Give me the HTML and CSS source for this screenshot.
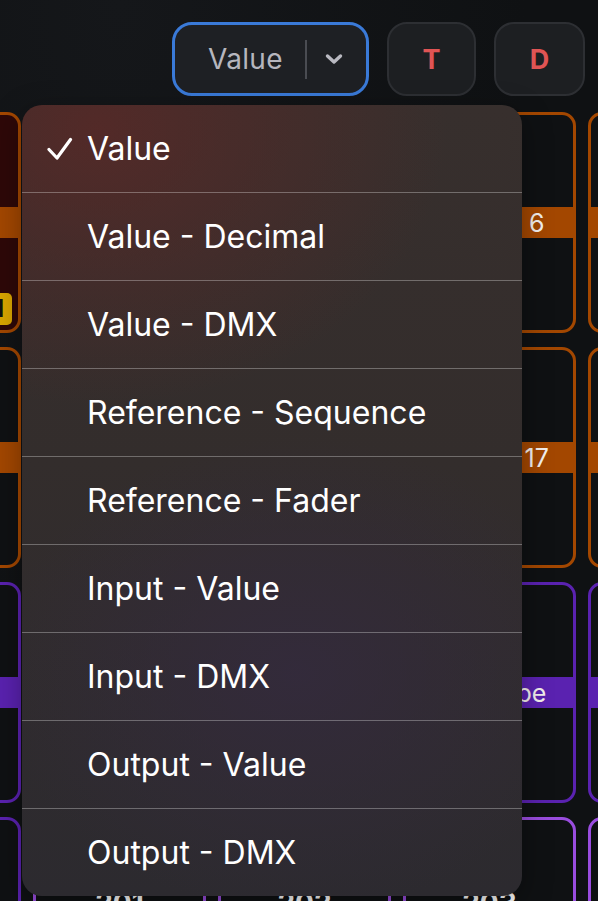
FILE: index.html
```html
<!DOCTYPE html>
<html>
<head>
<meta charset="utf-8">
<link rel="stylesheet" href="styles.css">
</head>
<body>
<div class="page">
  <header class="topbar">
    <div class="select">
      <span class="select-value">Value</span>
      <span class="select-div"></span>
      <svg class="chev" width="18" height="12" viewBox="0 0 18 12"><polyline points="2.5,3 9,9 15.5,3" fill="none" stroke="#b9b9c1" stroke-width="3.4" stroke-linecap="round" stroke-linejoin="round"/></svg>
    </div>
    <button class="tbtn">T</button>
    <button class="tbtn wide">D</button>
  </header>

  <main class="grid">
    <div class="tile orange red-bg"><div class="band"><span>Groupe 1</span></div><span class="badge">1</span></div>
    <div class="tile orange"><div class="band"><span>Groupe 2</span></div></div>
    <div class="tile orange"><div class="band"><span>Groupe 4</span></div></div>
    <div class="tile orange"><div class="band"><span>Groupe 6</span></div></div>
    <div class="tile orange"><div class="band"><span>Groupe 7</span></div></div>

    <div class="tile orange"><div class="band"><span>Groupe 12</span></div></div>
    <div class="tile orange"><div class="band"><span>Groupe 15</span></div></div>
    <div class="tile orange"><div class="band"><span>Groupe 16</span></div></div>
    <div class="tile orange"><div class="band"><span>Groupe 17</span></div></div>
    <div class="tile orange"><div class="band"><span>Groupe 18</span></div></div>

    <div class="tile purple"><div class="band"><span>Color</span></div></div>
    <div class="tile purple"><div class="band"><span>Gobo</span></div></div>
    <div class="tile purple"><div class="band"><span>Prism</span></div></div>
    <div class="tile purple"><div class="band"><span>Fx Strobe</span></div></div>
    <div class="tile purple"><div class="band"><span>Zoom</span></div></div>

    <div class="tile purple"><div class="num">200</div></div>
    <div class="tile violet"><div class="num">201</div></div>
    <div class="tile violet"><div class="num">202</div></div>
    <div class="tile violet"><div class="num">203</div></div>
    <div class="tile violet"><div class="num">204</div></div>
  </main>

  <ul class="menu">
    <li class="item"><span class="check"><svg width="26" height="24" viewBox="0 0 26 24"><polyline points="2,12.5 10,21 23.5,2.5" fill="none" stroke="#ffffff" stroke-width="3.2" stroke-linecap="round" stroke-linejoin="round"/></svg></span><span class="label">Value</span></li>
    <li class="item"><span class="check"></span><span class="label">Value - Decimal</span></li>
    <li class="item"><span class="check"></span><span class="label">Value - DMX</span></li>
    <li class="item"><span class="check"></span><span class="label">Reference - Sequence</span></li>
    <li class="item"><span class="check"></span><span class="label">Reference - Fader</span></li>
    <li class="item"><span class="check"></span><span class="label">Input - Value</span></li>
    <li class="item"><span class="check"></span><span class="label">Input - DMX</span></li>
    <li class="item"><span class="check"></span><span class="label">Output - Value</span></li>
    <li class="item"><span class="check"></span><span class="label">Output - DMX</span></li>
  </ul>
</div>
</body>
</html>
```

FILE: styles.css
```css
* { box-sizing: border-box; }
html, body {
  margin: 0;
  padding: 0;
  width: 598px;
  height: 901px;
  overflow: hidden;
  background: #101214;
  font-family: Inter, "Noto Sans", sans-serif;
}
.page {
  position: relative;
  width: 598px;
  height: 901px;
  overflow: hidden;
  background: radial-gradient(ellipse at 20% 0%, #15171a 0%, #0f1113 60%);
}
.topbar {
  display: flex;
  justify-content: flex-end;
  gap: 18px;
  padding: 22px 13px 0 0;
  height: 96px;
}
.select {
  width: 197px;
  height: 74px;
  border: 3px solid #3a7ad8;
  border-radius: 20px;
  background: #1e2024;
  display: flex;
  align-items: center;
  padding-left: 33px;
}
.select-value {
  font-family: Inter, sans-serif;
  font-weight: 400;
  font-size: 28px;
  color: #b6b6be;
  letter-spacing: 0.3px;
  width: 97px;
}
.select-div {
  width: 2px;
  height: 39px;
  background: #4a4c52;
}
.chev {
  margin-left: 18px;
}
.tbtn {
  width: 89px;
  height: 74px;
  border: 2.5px solid #2d2f33;
  border-radius: 20px;
  background: #1d1f22;
  color: #e05454;
  font-family: Inter, sans-serif;
  font-weight: 700;
  font-size: 27px;
  padding: 0;
  display: flex;
  align-items: center;
  justify-content: center;
}
.tbtn.wide { width: 91px; }

.grid {
  display: grid;
  grid-template-columns: repeat(5, 173px);
  grid-auto-rows: 221px;
  column-gap: 12px;
  row-gap: 14px;
  margin-top: 16px;
  margin-left: -152px;
  width: 920px;
}
.tile {
  position: relative;
  border: 3px solid #a34700;
  border-radius: 14px;
  background: #0f1113;
  padding-top: 92px;
}
.tile.orange { border-color: #a34700; }
.tile.orange .band { background: #a34700; }
.tile.red-bg { background: #2e0808; }
.tile.purple { border-color: #5a22b0; }
.tile.purple .band { background: #5a22b0; }
.tile.violet { border-color: #9a4ddf; padding-top: 66px; }
.tile.purple:has(.num) { padding-top: 66px; }
.band {
  height: 31px;
  margin: 0 -1px;
  display: flex;
  align-items: center;
  justify-content: center;
  color: #f4f0ee;
  font-family: Inter, sans-serif;
  font-size: 25px;
  white-space: nowrap;
  overflow: hidden;
}
.num {
  text-align: center;
  color: #ffffff;
  font-family: Inter, sans-serif;
  font-weight: 700;
  font-size: 28px;
}
.badge {
  position: absolute;
  right: 6px;
  bottom: 5px;
  background: #d9a600;
  color: #111;
  font-weight: 700;
  font-size: 24px;
  line-height: 32px;
  height: 32px;
  padding: 0 8px;
  border-radius: 5px;
}

.menu {
  position: absolute;
  left: 22px;
  top: 105px;
  width: 500px;
  margin: 0;
  padding: 0;
  list-style: none;
  border-radius: 20px;
  overflow: hidden;
  background:
    radial-gradient(ellipse 70% 35% at 15% 3%, rgba(92,40,38,0.75) 0%, rgba(92,40,38,0) 100%),
    radial-gradient(ellipse 60% 30% at 55% 72%, rgba(52,42,62,0.8) 0%, rgba(52,42,62,0) 100%),
    linear-gradient(180deg, #372f2d 0%, #332d2c 45%, #2c2a2f 100%);
  box-shadow: 0 8px 30px rgba(0,0,0,0.35);
}
.item {
  height: 87px;
  display: flex;
  align-items: center;
  padding-left: 25px;
  color: #ffffff;
  font-family: Inter, "Noto Sans", sans-serif;
  font-size: 32px;
  font-weight: 400;
}
.item + .item {
  height: 88px;
  border-top: 1px solid rgba(255,255,255,0.3);
}
.check {
  width: 40px;
  display: flex;
  align-items: center;
}
.label { white-space: nowrap; }
```
